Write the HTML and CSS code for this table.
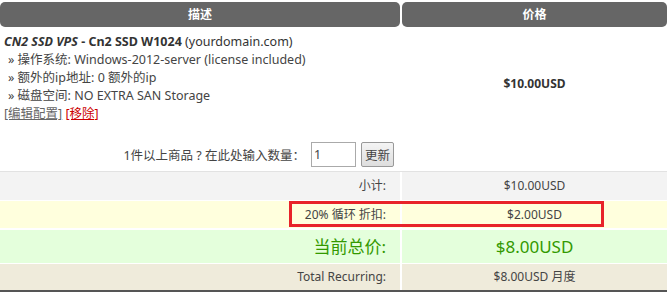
FILE: index.html
```html
<!DOCTYPE html>
<html>
<head>
<meta charset="utf-8">
<link rel="stylesheet" href="styles.css">
</head>
<body>
<div class="cart">
  <div class="row head">
    <div class="hcell">描述</div>
    <div class="hcell">价格</div>
  </div>
  <div class="row product">
    <div class="desc">
      <div class="title"><b><i>CN2 SSD VPS</i> - Cn2 SSD W1024</b> (yourdomain.com)</div>
      <div class="opt">» 操作系统: Windows-2012-server (license included)</div>
      <div class="opt">» 额外的ip地址: 0 额外的ip</div>
      <div class="opt">» 磁盘空间: NO EXTRA SAN Storage</div>
      <div class="links"><a class="edit" href="#">[编辑配置]</a> <a class="remove" href="#">[移除]</a></div>
    </div>
    <div class="price">$10.00USD</div>
  </div>
  <div class="row qty">
    <div class="qtycell">
      <span>1件以上商品 ? 在此处输入数量：</span>
      <input class="qtyinput" type="text" value="1">
      <button class="upd">更新</button>
    </div>
    <div></div>
  </div>
  <div class="totals">
    <div class="row sub">
      <div class="lab">小计:</div>
      <div class="val">$10.00USD</div>
    </div>
    <div class="row disc">
      <div class="lab">20% 循环 折扣:</div>
      <div class="val">$2.00USD</div>
      <div class="mark"></div>
    </div>
    <div class="row total">
      <div class="lab">当前总价:</div>
      <div class="val">$8.00USD</div>
    </div>
    <div class="row recur">
      <div class="lab">Total Recurring:</div>
      <div class="val">$8.00USD 月度</div>
    </div>
  </div>
</div>
</body>
</html>
```
FILE: styles.css
```css
html, body {
  margin: 0;
  padding: 0;
  background: #fff;
}
body {
  font-family: "Noto Sans", "Noto Sans CJK SC", sans-serif;
  font-size: 12px;
  color: #444;
}
.cart {
  width: 667px;
  padding-top: 2px;
}
.row {
  display: grid;
  grid-template-columns: 400px 265px;
  column-gap: 2px;
}
.hcell {
  background: #666;
  color: #fff;
  font-weight: bold;
  text-align: center;
  height: 25px;
  line-height: 25px;
  border-radius: 5px;
}
.product {
  height: 108px;
}
.desc {
  padding: 6px 0 0 4px;
  line-height: 18px;
  font-size: 12.5px;
}
.title {
  color: #333;
}
.opt {
  padding-left: 4px;
}
.links a {
  text-decoration: underline;
}
.edit { color: #666; }
.remove { color: #cc0000; }
.price {
  display: flex;
  align-items: center;
  justify-content: center;
  font-weight: bold;
  color: #333;
  padding-top: 4px;
}
.qty {
  height: 36px;
  border-bottom: 1px solid #e2e2e2;
}
.qtycell {
  display: flex;
  align-items: center;
  justify-content: flex-end;
  gap: 5px;
  padding-right: 6px;
  padding-top: 2px;
  font-size: 12.5px;
}
.qtycell span {
  margin-right: 1px;
}
.qtyinput {
  width: 39px;
  height: 21px;
  box-sizing: content-box;
  padding: 1px 2px;
  border: 1px solid #aaa;
  font: inherit;
  color: #444;
}
.upd {
  height: 25px;
  padding: 0 3px;
  border: 1px solid #999;
  border-radius: 2px;
  background: linear-gradient(#f4f4f4, #dedede);
  font: inherit;
  color: #444;
}
.totals {
  display: flex;
  flex-direction: column;
  gap: 1px;
  border-bottom: 3px solid #555;
}
.lab {
  text-align: right;
  padding-right: 14px;
}
.val {
  text-align: center;
}
.sub { height: 28px; line-height: 28px; }
.disc { height: 27px; line-height: 27px; position: relative; }
.total { height: 33px; line-height: 33px; color: #339900; font-size: 17px; margin-top: 1px; }
.recur { height: 26px; line-height: 26px; }
.sub > .lab, .sub > .val { background: #f3f3f3; }
.disc > .lab, .disc > .val { background: #ffffdd; }
.total > .lab, .total > .val { background: #e4ffdc; }
.recur > .lab, .recur > .val { background: #efebdb; }
.mark {
  position: absolute;
  left: 289px;
  top: 0;
  width: 309px;
  height: 20px;
  border: 3px solid #e8232a;
}
```
